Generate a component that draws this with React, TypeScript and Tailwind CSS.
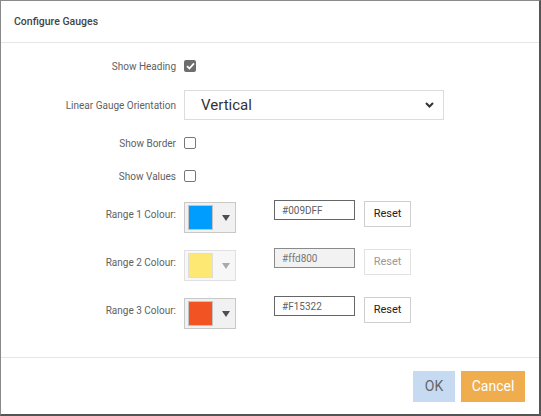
import React from "react";

const font = { fontFamily: "Roboto, 'Liberation Sans', sans-serif" };

const Check: React.FC<{ checked?: boolean }> = ({ checked }) =>
  checked ? (
    <span className="flex h-[12px] w-[12px] items-center justify-center rounded-[2px] bg-[#6e6e6e]">
      <svg width="9" height="8" viewBox="0 0 9 8">
        <path d="M1 4.2 L3.4 6.5 L8 1.3" fill="none" stroke="#fff" strokeWidth="1.8" />
      </svg>
    </span>
  ) : (
    <span className="block h-[12px] w-[12px] rounded-[2px] border border-[#777] bg-white" />
  );

const Row: React.FC<{ label: string; className?: string; children: React.ReactNode }> = ({
  label,
  className = "",
  children,
}) => (
  <div className={`flex items-center ${className}`}>
    <div className="w-[183px] pr-[8px] text-right text-[10px] text-[#5f5f5f]">{label}</div>
    {children}
  </div>
);

interface RangeProps {
  label: string;
  colour: string;
  hex: string;
  disabled?: boolean;
  className?: string;
}

const RangeRow: React.FC<RangeProps> = ({ label, colour, hex, disabled, className = "" }) => (
  <div className={`flex h-[48px] items-start ${className}`}>
    <div className="mt-[8px] w-[183px] pr-[8px] text-right text-[10px] leading-[14px] text-[#5f5f5f]">
      {label}
    </div>
    <div
      className={`mt-[2px] flex h-[31px] w-[52px] items-center border pl-[3px] ${
        disabled ? "border-[#e0e0e0] bg-[#f7f7f7]" : "border-[#c8c8c8] bg-[#f1f1f1]"
      }`}
    >
      <span
        className={`block h-[25px] w-[25px] border ${disabled ? "border-[#ddd]" : "border-[#c4c4c4]"}`}
        style={{ backgroundColor: colour }}
      />
      <svg className="ml-[9px]" width="8" height="6" viewBox="0 0 8 6">
        <path d="M0 0 H8 L4 6 Z" fill={disabled ? "#aaa" : "#4b4f56"} />
      </svg>
    </div>
    <div
      className={`ml-[38px] flex h-[20px] w-[81px] items-center border pl-[7px] text-[10px] ${
        disabled ? "border-[#8a8a8a] bg-[#f2f2f2] text-[#777]" : "border-[#666] bg-white text-[#5f5f5f]"
      }`}
    >
      {hex}
    </div>
    <button
      className={`ml-[9px] mt-[1px] flex h-[26px] w-[47px] items-center justify-center border bg-white text-[11px] ${
        disabled ? "border-[#e2e2e2] text-[#999]" : "border-[#cfcfcf] text-[#222]"
      }`}
    >
      Reset
    </button>
  </div>
);

export default function App() {
  return (
    <div
      style={font}
      className="flex h-[416px] w-[541px] flex-col border-t border-b-2 border-l border-r-2 border-t-[#8a8a8a] border-l-[#8a8a8a] border-b-[#555] border-r-[#555] bg-white"
    >
      <div className="flex h-[42px] shrink-0 items-center border-b border-[#e6e6e6] pl-[13px]">
        <span className="text-[10.5px] font-medium text-[#444]">Configure Gauges</span>
      </div>
      <div className="flex-1">
        <Row label="Show Heading" className="mt-[11px] h-[24px]">
          <Check checked />
        </Row>
        <Row label="Linear Gauge Orientation" className="mt-[12px] h-[30px]">
          <div className="flex h-[30px] w-[260px] items-center justify-between border border-[#dcdcdc] bg-white pl-[16px] pr-[9px]">
            <span className="text-[15px] text-[#333]">Vertical</span>
            <svg width="9" height="6" viewBox="0 0 9 6">
              <path d="M1 1 L4.5 4.5 L8 1" fill="none" stroke="#333" strokeWidth="2" />
            </svg>
          </div>
        </Row>
        <Row label="Show Border" className="mt-[11px] h-[24px]">
          <Check />
        </Row>
        <Row label="Show Values" className="mt-[9px] h-[24px]">
          <Check />
        </Row>
        <RangeRow label="Range 1 Colour:" colour="#009DFF" hex="#009DFF" className="mt-[12px]" />
        <RangeRow label="Range 2 Colour:" colour="#fde874" hex="#ffd800" disabled />
        <RangeRow label="Range 3 Colour:" colour="#F15322" hex="#F15322" />
      </div>
      <div className="flex h-[57px] shrink-0 items-center justify-end gap-[6px] border-t border-[#e6e6e6] pr-[14px]">
        <button className="h-[31px] w-[42px] bg-[#c6dbf1] text-[14px] text-[#666]">OK</button>
        <button className="h-[31px] w-[64px] bg-[#efad4e] text-[14px] text-white">Cancel</button>
      </div>
    </div>
  );
}
